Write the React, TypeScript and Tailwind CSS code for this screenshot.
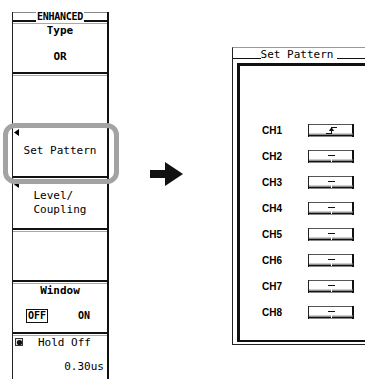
import React from "react";

const mono = "font-['DejaVu_Sans_Mono',monospace]";
const sans = "font-['Liberation_Sans',Arial,sans-serif]";

function Tri() {
  return (
    <svg className="absolute left-[1px] top-[1px]" width="6" height="7" viewBox="0 0 6 7">
      <polygon points="5,0 5,7 0,3.5" fill="#000" />
    </svg>
  );
}

function Section({ children, className = "" }: { children?: React.ReactNode; className?: string }) {
  return (
    <div className="h-[52px] flex flex-col border-b-2 border-[#111]">
      <div className={"mt-px flex-1 border-t border-[#a8a8a8] relative " + className}>{children}</div>
    </div>
  );
}

function PatBtn({ edge }: { edge?: boolean }) {
  return (
    <svg width="46" height="13" viewBox="0 0 46 13">
      <line x1="0.5" y1="0.5" x2="45.5" y2="0.5" stroke="#555" strokeWidth="1" />
      <line x1="0.5" y1="0" x2="0.5" y2="13" stroke="#222" strokeWidth="1" />
      <line x1="45" y1="0" x2="45" y2="13" stroke="#111" strokeWidth="2" />
      <line x1="0" y1="11.5" x2="46" y2="11.5" stroke="#111" strokeWidth="2" />
      <line x1="1" y1="10" x2="45" y2="10" stroke="#999" strokeWidth="1" />
      {edge ? (
        <g stroke="#111" strokeWidth="1" fill="none">
          <line x1="18" y1="9.5" x2="23.5" y2="9.5" />
          <line x1="23.5" y1="3" x2="23.5" y2="10" />
          <line x1="23.5" y1="3.5" x2="29" y2="3.5" />
          <polygon points="21.5,6.5 25.5,6.5 23.5,4" fill="#111" />
        </g>
      ) : (
        <g stroke="#111" strokeWidth="1">
          <line x1="20" y1="5.5" x2="27" y2="5.5" />
          <line x1="23.5" y1="9" x2="23.5" y2="12" stroke="#fff" />
        </g>
      )}
    </svg>
  );
}

export default function App() {
  const chs = ["CH1", "CH2", "CH3", "CH4", "CH5", "CH6", "CH7", "CH8"];
  return (
    <div className="relative w-[365px] h-[379px] bg-white overflow-hidden flex text-black">
      {/* Left soft-key panel */}
      <div className="ml-[12px] mt-[12px] w-[97px] shrink-0 flex flex-col border-l border-[#222] border-r-2 border-r-[#111]">
        <div className={"h-[10px] border-t border-[#888] border-b-2 border-b-[#111] flex justify-center items-end " + mono}>
          <span className="bg-white px-px text-[10px] font-bold leading-[10px] tracking-[-0.3px] translate-y-[2px]">ENHANCED</span>
        </div>
        <Section className={"flex flex-col items-center " + mono}>
          <span className="text-[11px] font-bold leading-[12px] mt-[1px]">Type</span>
          <span className="text-[11px] font-bold leading-[12px] mt-[14px]">OR</span>
        </Section>
        <Section />
        <Section className={"flex items-center justify-center " + mono}>
          <Tri />
          <span className="text-[11px] leading-[12px] -mt-[3px]">Set Pattern</span>
        </Section>
        <Section className={"flex items-center justify-center " + mono}>
          <Tri />
          <div className="flex flex-col text-[11px] leading-[14px] -mt-[3px]">
            <span>Level/</span>
            <span>Coupling</span>
          </div>
        </Section>
        <Section />
        <Section className={"flex flex-col " + mono}>
          <span className="text-[11px] font-bold leading-[12px] mt-[1px] text-center">Window</span>
          <div className="flex items-center mt-[12px] text-[10px] font-bold">
            <span className="ml-[13px] border border-[#111] px-px leading-[12px]">OFF</span>
            <span className="ml-[30px] leading-[12px]">ON</span>
          </div>
        </Section>
        <div className={"flex-1 flex flex-col relative border-t border-[#a8a8a8] mt-px " + mono}>
          <svg className="absolute left-[2px] top-[2px]" width="8" height="8" viewBox="0 0 8 8">
            <rect x="0.5" y="0.5" width="7" height="7" fill="#ddd" stroke="#333" />
            <circle cx="4.5" cy="4.5" r="2.6" fill="#111" />
          </svg>
          <span className="text-[11px] leading-[12px] mt-[1px] ml-[25px]">Hold Off</span>
          <span className="text-[11px] leading-[12px] mt-[12px] self-end mr-[3px]">0.30us</span>
        </div>
      </div>

      {/* Highlight ring */}
      <div className="absolute left-[3px] top-[123px] w-[116px] h-[61px] border-[5px] border-[#a3a3a3] rounded-[12px]" />

      {/* Arrow */}
      <div className="flex-1 flex justify-center pt-[162px]">
        <svg width="33" height="24" viewBox="0 0 33 24" className="-ml-[8px]">
          <rect x="0" y="8" width="16" height="8" fill="#111" />
          <polygon points="15,0 33,12 15,24" fill="#111" />
        </svg>
      </div>

      {/* Right dialog */}
      <div className="mt-[47px] w-[133px] h-[298px] shrink-0 flex flex-col border-l border-[#222] border-t border-t-[#999] border-b border-b-[#222]">
        <div className={"h-[11px] border-b border-[#111] flex justify-center items-end " + mono}>
          <span className="bg-white text-[11px] leading-[11px] translate-y-[2px] pr-[4px]">Set Pattern</span>
        </div>
        <div className="mt-[4px] ml-[4px] flex-1 mb-[2px] border-l-[3px] border-t-[3px] border-b-2 border-[#111] flex flex-col pt-[58px] gap-[13px]">
          {chs.map((c, i) => (
            <div key={c} className="flex items-center h-[13px]">
              <span className={"w-[46px] ml-[22px] text-[10px] font-bold " + sans}>{c}</span>
              <PatBtn edge={i === 0} />
            </div>
          ))}
        </div>
      </div>
    </div>
  );
}
